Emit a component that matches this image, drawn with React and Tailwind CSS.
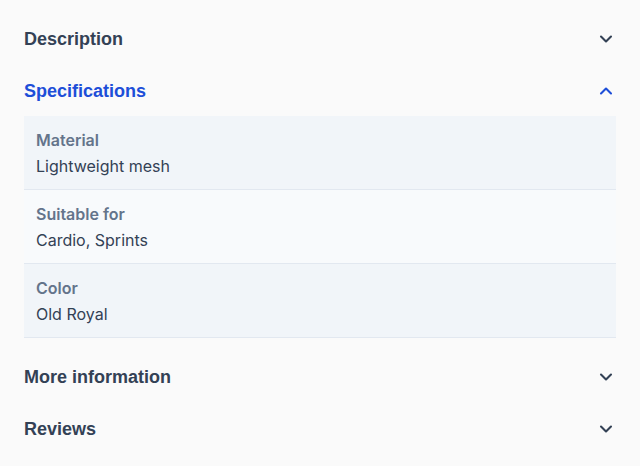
import { useState } from 'react'
import { ChevronDown, ChevronUp } from 'lucide-react'

const specs = [
  { label: 'Material', value: 'Lightweight mesh' },
  { label: 'Suitable for', value: 'Cardio, Sprints' },
  { label: 'Color', value: 'Old Royal' },
]

const sections = ['Description', 'Specifications', 'More information', 'Reviews']

function SpecTable() {
  return (
    <dl className="-mt-px mb-[13px] bg-[#f8fafc]">
      {specs.map((s, i) => (
        <div
          key={s.label}
          className={`border-b border-[#e2e8f0] px-3 pt-3 pb-[11px] ${i % 2 === 0 ? 'bg-[#f1f5f9]' : 'bg-[#f8fafc]'}`}
        >
          <dt className="text-base leading-6 font-semibold text-[#64748b]">{s.label}</dt>
          <dd className="mt-0.5 text-base leading-6 text-[#334155]">{s.value}</dd>
        </div>
      ))}
    </dl>
  )
}

export default function App() {
  const [open, setOpen] = useState('Specifications')

  return (
    <div className="min-h-[466px] bg-[#fafafa] px-6 pt-[13px] font-['Inter',sans-serif]">
      {sections.map((name) => {
        const isOpen = open === name
        return (
          <div key={name}>
            <button
              type="button"
              onClick={() => setOpen(isOpen ? null : name)}
              className={`flex h-[52px] w-full items-center justify-between text-left font-['Liberation_Sans',Arial,sans-serif] text-[18px] font-bold ${isOpen ? 'text-[#1d4ed8]' : 'text-[#334155]'}`}
            >
              <span>{name}</span>
              {isOpen ? (
                <ChevronUp size={20} strokeWidth={2.5} />
              ) : (
                <ChevronDown size={20} strokeWidth={2.5} />
              )}
            </button>
            {isOpen && name === 'Specifications' && <SpecTable />}
          </div>
        )
      })}
    </div>
  )
}
